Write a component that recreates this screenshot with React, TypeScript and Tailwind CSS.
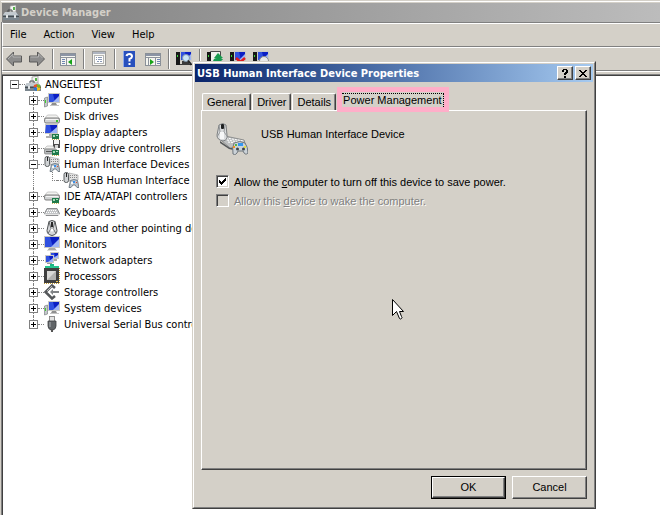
import type { ReactNode } from "react";

const tahoma = "font-['DejaVu_Sans_Condensed','DejaVu_Sans',sans-serif]";
const sans = "font-['Liberation_Sans',Arial,sans-serif]";

function Svg({ children, size = 16 }: { children: ReactNode; size?: number }) {
  return (
    <svg width={size} height={size} viewBox={`0 0 ${size} ${size}`} className="block shrink-0" aria-hidden="true">
      {children}
    </svg>
  );
}

/* Small pieces shared by several device icons */

function Screen({ x, y, w, h }: { x: number; y: number; w: number; h: number }) {
  return (
    <>
      <rect x={x} y={y} width={w} height={h} fill="#c9c9c4" />
      <rect x={x + 1} y={y + 1} width={w - 2} height={h - 2} fill="#0b1fc4" />
      <path d={`M${x + 1} ${y + 1}h${Math.round(w / 3)}l${Math.round(w / 6)} ${h - 2}h-${Math.round(w / 2)}z`} fill="#2f50e0" />
      <path d={`M${x + w - 1} ${y + 3}v${h - 4}h-${Math.round(w / 2)}z`} fill="#9db4f6" />
    </>
  );
}

function Card({ x, y }: { x: number; y: number }) {
  return (
    <>
      <rect x={x} y={y} width="7" height="5" fill="#1f7a4a" />
      <path d={`M${x + 1} ${y + 1}h2v2h-2zM${x + 4} ${y + 1}h2v1h-2z`} fill="#a9dcb9" />
      <path d={`M${x} ${y + 5.5}h7`} stroke="#c9b458" strokeDasharray="1 1" />
    </>
  );
}

const toolbox = (
  <>
    <path d="M7 1l6-1v7H7z" fill="#f4f4f2" stroke="#8a8a8a" strokeWidth=".7" />
    <rect x="10" y="2" width="2" height="3" fill="#55b34a" />
    <path d="M2 7h11l3 3v5H0v-5z" fill="#7b868e" />
    <path d="M2 7h11l2 3H0z" fill="#c3cacf" />
    <path d="M5 7V5h4v2" fill="none" stroke="#4a4f53" />
    <rect x="0" y="11" width="16" height="1" fill="#444b50" />
    <rect x="3" y="10" width="2" height="3" fill="#dfe3e5" />
    <rect x="11" y="10" width="2" height="3" fill="#dfe3e5" />
  </>
);

const disk = (y: number) => (
  <>
    <path d={`M3.500 ${y}h9l3 3.500h-15z`} fill="#f3f3f1" stroke="#b5b5b5" strokeWidth=".7" />
    <rect x=".5" y={y + 3} width="15" height="5" rx="1.500" fill="#d0d2d2" stroke="#707070" strokeWidth=".9" />
    <path d={`M2 ${y + 4.5}h12`} stroke="#f4f4f4" />
  </>
);

const icons: Record<string, ReactNode> = {
  manager: toolbox,
  root: (
    <>
      {toolbox}
      <path d="M9 9l3-1v3.500H8.500z" fill="#e8562d" />
      <path d="M12 8l3 1 .5 2.500H12z" fill="#74b82c" />
      <path d="M8.500 11.500H12V15l-3-1z" fill="#2f78d6" />
      <path d="M12 11.500h3.500L15 14l-3 1z" fill="#f3c018" />
    </>
  ),
  computer: (
    <>
      <path d="M.5 6l3-1v9l-3 1z" fill="#c3c8ca" stroke="#7e8386" strokeWidth=".7" />
      <rect x="1" y="8" width="1" height="3" fill="#3fd02e" />
      <Screen x={4} y={1} w={12} h={10} />
      <path d="M8 11h4l1 2H7z" fill="#8f8f8f" />
      <path d="M6 13h9v1H6z" fill="#c4c4c4" />
    </>
  ),
  disk: (
    <>
      {disk(7)}
      <rect x="12" y="12" width="2" height="2" fill="#37c32c" />
    </>
  ),
  display: (
    <>
      <Screen x={1} y={0} w={13} h={10} />
      <path d="M5 10h5v2h1v2H2v-2h3z" fill="#b0b0ae" />
      <Card x={8} y={10} />
    </>
  ),
  floppy: (
    <>
      <rect x="9" y="0" width="7" height="8" fill="#4c4c4c" />
      <rect x="10" y="0" width="5" height="4" fill="#f4f4f4" />
      <rect x="11" y="5" width="3" height="3" fill="#d6d6d6" />
      <path d="M3 6h6l2 3H0z" fill="#f3f3f1" stroke="#aaa" strokeWidth=".6" />
      <rect x=".5" y="9" width="12" height="5" rx="1" fill="#b6b9bb" stroke="#777" strokeWidth=".7" />
      <rect x="2" y="11" width="6" height="1" fill="#555" />
      <Card x={8} y={10} />
    </>
  ),
  hid: (
    <>
      <path d="M6 1l9 2v5l-9 1z" fill="#e3e3e3" stroke="#999" strokeWidth=".6" />
      <path d="M7 3.500h8M7 5.500h8" stroke="#888" strokeDasharray="1 1" />
      <rect x="1" y=".5" width="4.500" height="10" rx="2" fill="#d0d3d5" stroke="#5a5e60" />
      <path d="M3.500 1v4" stroke="#222" />
      <path d="M7.500 8.500q3.500-2 7 0l1.500 7h-2l-2-2.500h-2l-2 2.500h-2z" fill="#b9c4cc" stroke="#5f6a73" strokeWidth=".8" />
      <rect x="8" y="10" width="2" height="2" fill="#f6f6f6" />
      <rect x="10" y="9" width="2" height="2" fill="#3f91ea" />
      <rect x="13" y="10" width="1" height="1" fill="#e34b32" />
    </>
  ),
  ide: (
    <>
      {disk(4)}
      <Card x={8} y={10} />
    </>
  ),
  keyboard: (
    <>
      <path d="M3 4.500h10l2.500 5-1.500 2H2l-1.500-2z" fill="#c3c5c7" stroke="#77797b" strokeWidth=".8" />
      <path d="M3 6.500h10M2 8.500h12" stroke="#fff" strokeDasharray="1 1" />
      <path d="M1 10.500h14" stroke="#e4e4e4" />
    </>
  ),
  mouse: (
    <>
      <path d="M5 1.500q3-2 6 0l2 9q0 4-5 5-5-1-5-5z" fill="#d6d8da" stroke="#4d5052" />
      <path d="M5 1.500l2 7-3 5M11 1.500l-2 7 3 5" fill="none" stroke="#676a6c" />
      <rect x="7" y="2" width="2" height="5" fill="#28292a" />
      <circle cx="8" cy="10" r="1.500" fill="#fff" />
    </>
  ),
  monitor: (
    <>
      <Screen x={0} y={0} w={16} h={12} />
      <path d="M5 12h6l2 3H3z" fill="#a9a9a7" />
      <path d="M3 14h10v1H3z" fill="#dcdcda" />
    </>
  ),
  network: (
    <>
      <Screen x={6} y={0} w={9} h={7} />
      <path d="M9 7h4v2H9z" fill="#a9a9a7" />
      <Screen x={1} y={3} w={9} h={8} />
      <path d="M3 11h5v1H3z" fill="#999" />
      <rect x="6" y="12" width="4" height="2" fill="#19b883" />
      <rect x="1" y="14" width="14" height="2" fill="#27c48e" />
    </>
  ),
  cpu: (
    <>
      <rect x="0" y="0" width="15" height="15" fill="#404040" />
      <path d="M0 15.500h16M15.500 0v15" stroke="#c09a32" strokeDasharray="1 1" />
      <rect x="3" y="3" width="9" height="9" fill="#b2b2b0" />
      <path d="M3 3h9l-9 9z" fill="#d9d9d7" />
      <rect x="12" y="13" width="2" height="1" fill="#eac24c" />
    </>
  ),
  storage: (
    <>
      <path d="M11 4L8 1.500 1.500 8 8 14.500 11 12" fill="none" stroke="#54575a" strokeWidth="2.500" />
      <path d="M7 8h8" stroke="#808386" strokeWidth="2" />
      <path d="M6 8l3-3v6z" fill="#808386" />
      <path d="M3 7l5-5" stroke="#b7babc" />
    </>
  ),
  usb: (
    <>
      <rect x="5.500" y=".5" width="5" height="5" fill="#e2e2e2" stroke="#777" strokeWidth=".8" />
      <path d="M4 5h8v5q0 3-3 4H7q-3-1-3-4z" fill="#616568" stroke="#3d4042" strokeWidth=".8" />
      <path d="M6 6v5" stroke="#aeb2b5" />
      <path d="M8 13v3" stroke="#555" strokeWidth="2" />
    </>
  ),
};

const pcTower = (
  <>
    <path d="M0 1h4v13H0z" fill="#171717" />
    <rect x="1" y="4" width="1" height="2" fill="#38dc38" />
    <Screen x={4} y={0} w={12} h={10} />
  </>
);

const toolIcons: Record<string, ReactNode> = {
  back: (
    <>
      <path d="M.5 8L7.500 1v4h8v6h-8v4z" fill="#8c8c8c" stroke="#5a5a5a" />
      <path d="M2 8l5-5v3h8" fill="none" stroke="#b4b4b4" />
    </>
  ),
  forward: (
    <>
      <path d="M15.500 8l-7-7v4h-8v6h8v4z" fill="#8c8c8c" stroke="#5a5a5a" />
      <path d="M1.500 6h8V3l4 4" fill="none" stroke="#b4b4b4" />
    </>
  ),
  tree: (
    <>
      <rect x=".5" y="2.500" width="15" height="12" fill="#f5f5f0" stroke="#8a9098" />
      <path d="M1 4h14" stroke="#8b94a5" strokeWidth="2" />
      <path d="M1 6.500h14M6.500 7v7" stroke="#8d939c" />
      <path d="M2 8.500h3M2 10.500h3M2 12.500h3" stroke="#6f86b4" />
      <path d="M12 8v6l-4-3z" fill="#17a318" />
    </>
  ),
  properties: (
    <>
      <rect x="1.500" y=".5" width="13" height="14" fill="#f6f6f2" stroke="#9b9b98" />
      <path d="M2 2h12" stroke="#aeb4c0" strokeWidth="2" />
      <rect x="3.500" y="4.500" width="9" height="8" fill="#fff" stroke="#b6b6b3" />
      <path d="M5 6.500h1M5 8.500h1M7 6.500h4M7 8.500h4M6 10.500h2M9 10.500h2" stroke="#8b9ab5" />
    </>
  ),
  help: (
    <>
      <rect x="1" y="0" width="12" height="16" fill="#2850bd" />
      <path d="M1 0h1v16H1z" fill="#8ca7e8" />
      <path d="M4.500 5Q5 3 7.500 3t2.500 2.500Q10 7 7.500 8v2.500" fill="none" stroke="#fff" strokeWidth="2" />
      <rect x="6.500" y="12" width="2" height="2" fill="#fff" />
    </>
  ),
  action: (
    <>
      <rect x=".5" y="2.500" width="15" height="12" fill="#f5f5f0" stroke="#8a9098" />
      <path d="M1 4h14" stroke="#8b94a5" strokeWidth="2" />
      <path d="M1 6.500h14M10.500 7v7M3.500 7v7" stroke="#8d939c" />
      <path d="M12 8.500h3M12 10.500h3M12 12.500h3" stroke="#6f86b4" />
      <path d="M5 8v6l4-3z" fill="#17a318" />
    </>
  ),
  scan: (
    <>
      {pcTower}
      <path d="M6 10h7v3h3v1H4v-1h2z" fill="#3b3b3b" />
      <circle cx="10" cy="7" r="3.500" fill="#c9e4f7" stroke="#8196a8" />
      <path d="M12 9.500l3.500 4.500" stroke="#252525" strokeWidth="2" />
    </>
  ),
  update: (
    <>
      <path d="M3.500.500h10v14h-10z" fill="#f1f1ed" stroke="#4a4a4a" />
      <path d="M0 1h4v13H0z" fill="#171717" />
      <rect x="1" y="4" width="1" height="2" fill="#38dc38" />
      <path d="M6 11q0-4 4-4V4l6 4.500-6 4.500v-3q-3 0-4 1z" fill="#189a4d" />
      <path d="M7 7l4-5 5 5z" fill="#189a4d" />
    </>
  ),
  uninstall: (
    <>
      {pcTower}
      <path d="M6 7l8 7M15 7l-8 7" stroke="#e11c1c" strokeWidth="2.500" />
    </>
  ),
  disable: (
    <>
      {pcTower}
      <circle cx="11" cy="10" r="4.500" fill="#e8e8e8" stroke="#8a8a8a" />
    </>
  ),
};

const toolGroups = [["back", "forward"], ["tree"], ["properties"], ["help", "action"], ["scan"], ["update", "uninstall", "disable"]];

type Device = { icon: string; label: string; children?: Device[] };

const devices: Device[] = [
  { icon: "computer", label: "Computer" },
  { icon: "disk", label: "Disk drives" },
  { icon: "display", label: "Display adapters" },
  { icon: "floppy", label: "Floppy drive controllers" },
  {
    icon: "hid",
    label: "Human Interface Devices",
    children: [{ icon: "hid", label: "USB Human Interface Device" }],
  },
  { icon: "ide", label: "IDE ATA/ATAPI controllers" },
  { icon: "keyboard", label: "Keyboards" },
  { icon: "mouse", label: "Mice and other pointing devices" },
  { icon: "monitor", label: "Monitors" },
  { icon: "network", label: "Network adapters" },
  { icon: "cpu", label: "Processors" },
  { icon: "storage", label: "Storage controllers" },
  { icon: "computer", label: "System devices" },
  { icon: "usb", label: "Universal Serial Bus controllers" },
];

const dotted = "border-dotted border-[#808080]";

function Expander({ open, top = true, bottom = true }: { open: boolean; top?: boolean; bottom?: boolean }) {
  return (
    <span className="flex h-4 w-[9px] shrink-0 flex-col items-center">
      <span className={`h-1 w-px ${top ? `border-l ${dotted}` : ""}`} />
      <button type="button" aria-label={open ? "Collapse" : "Expand"} className="block size-[9px]">
        <svg width="9" height="9" className="block">
          <rect x=".5" y=".5" width="8" height="8" fill="#fff" stroke="#808080" />
          <path d={open ? "M2 4.500h5" : "M2 4.500h5M4.500 2v5"} stroke="#000" />
        </svg>
      </button>
      <span className={`h-[3px] w-px ${bottom ? `border-l ${dotted}` : ""}`} />
    </span>
  );
}

function Leaf({ icon, label }: { icon: string; label: string }) {
  return (
    <>
      <span className={`w-1.5 shrink-0 border-t ${dotted}`} />
      <Svg>{icons[icon]}</Svg>
      <span className="pt-0.5 pl-1 whitespace-nowrap">{label}</span>
    </>
  );
}

function DeviceTree() {
  return (
    <ul className="grow overflow-hidden border-t border-l border-[#404040] bg-white pl-[7px] text-[11px] leading-4 text-black">
      <li>
        <div className="flex h-4 items-center">
          <Expander open top={false} bottom={false} />
          <Leaf icon="root" label="ANGELTEST" />
        </div>
        <ul className="pl-[19px]">
          {devices.map((device, index) => (
            <li key={device.label}>
              <div className="flex h-4 items-center">
                <Expander open={Boolean(device.children)} bottom={index < devices.length - 1} />
                <Leaf icon={device.icon} label={device.label} />
              </div>
              {device.children && (
                <ul>
                  {device.children.map((child) => (
                    <li key={child.label} className="flex h-4 items-center">
                      <span className="flex w-[19px] shrink-0 pl-1">
                        <span className={`h-4 border-l ${dotted}`} />
                      </span>
                      <span className="flex h-4 w-[9px] shrink-0 pl-1">
                        <span className={`h-[9px] w-[5px] border-b border-l ${dotted}`} />
                      </span>
                      <Leaf icon={child.icon} label={child.label} />
                    </li>
                  ))}
                </ul>
              )}
            </li>
          ))}
        </ul>
      </li>
    </ul>
  );
}

function Toolbar() {
  return (
    <div className="flex h-6 items-center border-t border-b border-l border-t-white border-b-[#808080] border-l-white pl-[3px]">
      {toolGroups.map((group, index) => (
        <div key={group[0]} className="flex items-center">
          {index > 0 && <span className="mr-1.5 ml-[7px] h-5 w-0.5 border-r border-l border-r-white border-l-[#808080]" />}
          <div className="flex gap-[7px]">
            {group.map((name) => (
              <button key={name} type="button" aria-label={name}>
                <Svg>{toolIcons[name]}</Svg>
              </button>
            ))}
          </div>
        </div>
      ))}
    </div>
  );
}

function DeviceManager() {
  return (
    <main className="flex min-h-screen flex-col bg-[#d4d0c8] pl-px">
      <div className="mt-px h-0.5 border-t border-white" />
      <header className="ml-px flex h-[19px] items-center gap-0.5 bg-linear-to-r from-[#808080] to-[#bcbcbc] pl-px">
        <Svg>{icons.manager}</Svg>
        <h1 className="pt-px text-[11px] font-bold text-[#d4d0c8]">Device Manager</h1>
      </header>
      <div className="border-l border-[#808080]">
        <nav className="flex h-[25px] items-center gap-[17px] border-t border-b border-l border-t-[#808080] border-b-[#808080] border-l-white pt-0.5 pl-[7px] text-[11px] text-black shadow-[inset_0_1px_0_#fff]">
          {["File", "Action", "View", "Help"].map((item) => (
            <button key={item} type="button">
              {item}
            </button>
          ))}
        </nav>
        <Toolbar />
        <div className="h-[3px] border-t border-t-white" />
      </div>
      <div className="flex grow flex-col border-t border-l border-[#808080]">
        <DeviceTree />
      </div>
    </main>
  );
}

function CaptionButton({ label, children }: { label: string; children: ReactNode }) {
  return (
    <button
      type="button"
      aria-label={label}
      className="flex h-3.5 w-4 items-center justify-center border border-t-white border-r-[#404040] border-b-[#404040] border-l-white bg-[#d4d0c8] shadow-[inset_-1px_-1px_0_#808080]"
    >
      {children}
    </button>
  );
}

type OptionProps = { id: string; before: string; hotkey: string; after: string; disabled?: boolean };

function Option({ id, before, hotkey, after, disabled }: OptionProps) {
  return (
    <div className="flex h-[19px] items-center gap-[5px]">
      <span className="grid size-[13px] place-items-center">
        <input
          id={id}
          type="checkbox"
          defaultChecked={!disabled}
          disabled={disabled}
          className="peer col-start-1 row-start-1 size-[13px] appearance-none border border-t-[#808080] border-r-white border-b-white border-l-[#808080] bg-white shadow-[inset_1px_1px_0_#404040,inset_-1px_-1px_0_#d4d0c8] disabled:bg-[#d4d0c8]"
        />
        <svg width="7" height="7" className="pointer-events-none col-start-1 row-start-1 hidden peer-checked:block">
          <path d="M0 2h1v1h1v1h1V3h1V2h1V1h1V0h1v3H6v1H5v1H4v1H3v1H2V6H1V5H0z" fill="#000" />
        </svg>
      </span>
      <label htmlFor={id} className={`pt-0.5 ${disabled ? "text-[#808080] [text-shadow:1px_1px_0_#fff]" : "text-black"}`}>
        {before}
        <span className="underline">{hotkey}</span>
        {after}
      </label>
    </div>
  );
}

function HidLarge() {
  return (
    <Svg size={32}>
      <path d="M9 13l19 4 2 6-16 2-9-8z" fill="#bdbfc0" stroke="#7d8082" strokeWidth=".8" />
      <path d="M10 15l18 3M11 17l17 3M12 19l16 2" stroke="#fff" strokeDasharray="2 1" />
      <path d="M4 18l10 7h3v2l-4-1-9-6z" fill="#55585a" />
      <path d="M3 2q4-3 7 0l1 10q1 5-4 6-6-1-6-6z" fill="#d9dbdd" stroke="#7d8082" />
      <path d="M3 2l1 7-3 5M9 2l-1 7 3 4" fill="none" stroke="#95989a" />
      <rect x="5" y="1" width="3" height="5" rx="1" fill="#1f2021" />
      <path d="M4 9h4v7H4z" fill="#f6f7f8" />
      <path d="M18 20q6-3 11 0 3 4 3 10-3 3-5-2h-5q-2 5-5 3-1-6 1-11z" fill="#cbd2d8" stroke="#6f767c" />
      <rect x="22" y="20" width="5" height="3" fill="#3597ef" />
      <rect x="19" y="21" width="2" height="2" fill="#55b848" />
      <rect x="17" y="23" width="2" height="2" fill="#f09022" />
      <rect x="28" y="23" width="2" height="2" fill="#e6e33d" />
      <circle cx="21.500" cy="26" r="1.500" fill="#3d4449" />
      <circle cx="27.500" cy="26" r="1.500" fill="#3d4449" />
    </Svg>
  );
}

function PropertiesDialog() {
  const bevel = "border border-t-white border-r-[#404040] border-b-[#404040] border-l-white text-center shadow-[inset_-1px_-1px_0_#808080]";
  const tab = "h-[17px] rounded-t-xs border-t border-r border-l border-t-white border-r-[#404040] border-l-white px-1 shadow-[inset_-1px_0_0_#808080]";

  return (
    <section
      role="dialog"
      aria-labelledby="dialog-title"
      className="absolute top-[61px] right-16 bottom-1.5 left-[192px] border border-t-[#d4d0c8] border-r-[#404040] border-b-[#404040] border-l-[#d4d0c8] bg-[#d4d0c8]"
    >
      <div className="flex h-full flex-col border border-t-white border-r-[#808080] border-b-[#808080] border-l-white p-px">
        <header className="flex h-[18px] items-center gap-0.5 bg-linear-to-r from-[#0a246a] to-[#a6caf0] pr-0.5 pl-0.5">
          <h2 id="dialog-title" className="grow pt-0.5 text-[11px] font-bold whitespace-nowrap text-white">
            USB Human Interface Device Properties
          </h2>
          <CaptionButton label="Help">
            <svg width="6" height="9">
              <path d="M0 1h1V0h4v1h1v3H5v1H4v1H2V4h1V3h1V1H2v2H0zM2 7h2v2H2z" fill="#000" />
            </svg>
          </CaptionButton>
          <CaptionButton label="Close">
            <svg width="8" height="7">
              <path d="M0 0h2v1h1v1h2V1h1V0h2v1H7v1H6v1H5v1h1v1h1v1h1v1H6V6H5V5H3v1H2v1H0V6h1V5h1V4h1V3H2V2H1V1H0z" fill="#000" />
            </svg>
          </CaptionButton>
        </header>

        <div className={`flex grow flex-col px-1.5 pb-[7px] text-[11px] ${sans}`}>
          <div role="tablist" className="z-10 -mb-0.5 flex items-end gap-px pt-[5px] pl-px whitespace-nowrap">
            {["General", "Driver", "Details"].map((name) => (
              <button key={name} type="button" role="tab" className={`mb-0.5 ${tab}`}>
                {name}
              </button>
            ))}
            <button type="button" role="tab" aria-selected="true" className="h-[25px] border-[5px] border-[#ffaec9] bg-[#d4d0c8] pt-px">
              <span className="block h-3.5 border-t border-r border-dotted border-black px-px leading-3">Power Management</span>
            </button>
          </div>

          <div className="flex grow flex-col border border-t-white border-r-[#404040] border-b-[#404040] border-l-white px-3.5 pt-3 shadow-[inset_-1px_-1px_0_#808080]">
            <div className="flex gap-[13px]">
              <HidLarge />
              <p className="pt-[3px] leading-4">USB Human Interface Device</p>
            </div>
            <div className="pt-[17px]">
              <Option id="allow-off" before="Allow the " hotkey="c" after="omputer to turn off this device to save power." />
              <Option id="allow-wake" before="Allow this " hotkey="d" after="evice to wake the computer." disabled />
            </div>
          </div>

          <div className="flex justify-end gap-1.5 pt-1.5">
            <div className="h-[23px] w-[75px] border border-black">
              <button type="button" className={`size-full ${bevel}`}>
                OK
              </button>
            </div>
            <button type="button" className={`h-[23px] w-[75px] ${bevel}`}>
              Cancel
            </button>
          </div>
        </div>
      </div>
    </section>
  );
}

function Pointer() {
  return (
    <svg width="13" height="22" className="pointer-events-none absolute top-[299px] left-[392px]" aria-hidden="true">
      <path d="M.5.500v16l4-4 3 7q1 1 2 0t0-2l-2-5h4z" fill="#fff" stroke="#000" />
    </svg>
  );
}

export default function App() {
  return (
    <div className={`relative min-h-screen overflow-hidden ${tahoma}`}>
      <DeviceManager />
      <PropertiesDialog />
      <Pointer />
    </div>
  );
}
